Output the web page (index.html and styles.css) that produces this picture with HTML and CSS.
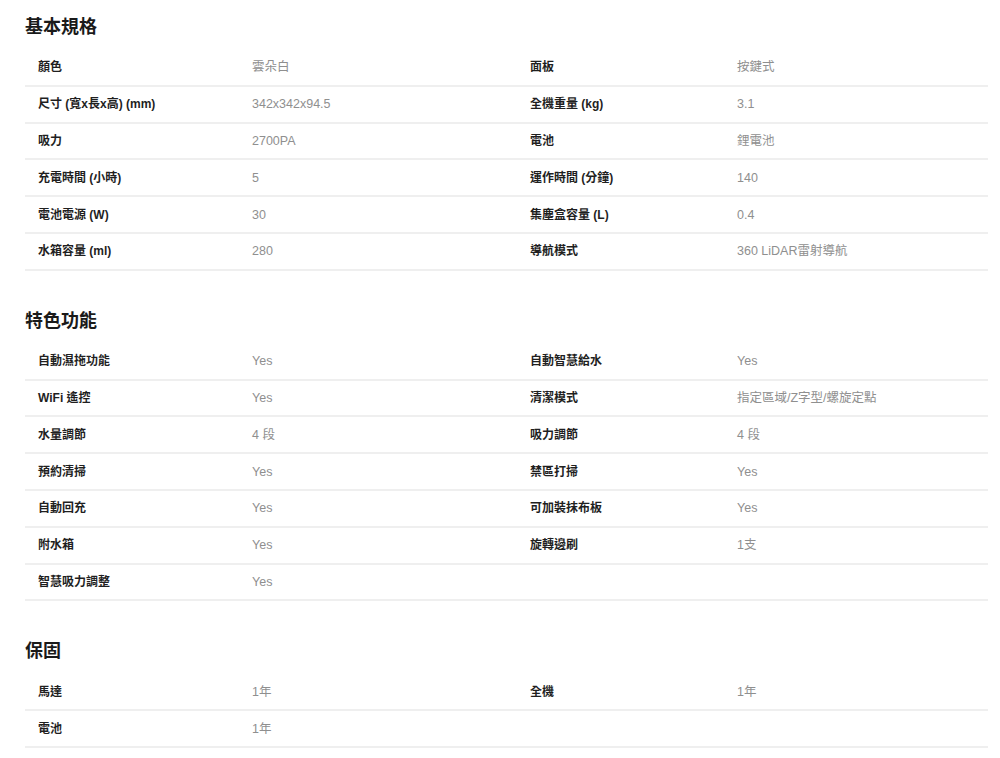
FILE: index.html
```html
<!DOCTYPE html>
<html lang="zh-Hant">
<head>
<meta charset="utf-8">
<title>規格</title>
<link rel="stylesheet" href="styles.css">
</head>
<body>
<div class="page">
  <section class="spec">
    <h2 class="spec-title">基本規格</h2>
    <div class="spec-grid">
      <div class="row"><span class="label">顏色</span><span class="value">雲朵白</span><span class="label">面板</span><span class="value">按鍵式</span></div>
      <div class="row"><span class="label">尺寸 (寬x長x高) (mm)</span><span class="value">342x342x94.5</span><span class="label">全機重量 (kg)</span><span class="value">3.1</span></div>
      <div class="row"><span class="label">吸力</span><span class="value">2700PA</span><span class="label">電池</span><span class="value">鋰電池</span></div>
      <div class="row"><span class="label">充電時間 (小時)</span><span class="value">5</span><span class="label">運作時間 (分鐘)</span><span class="value">140</span></div>
      <div class="row"><span class="label">電池電源 (W)</span><span class="value">30</span><span class="label">集塵盒容量 (L)</span><span class="value">0.4</span></div>
      <div class="row"><span class="label">水箱容量 (ml)</span><span class="value">280</span><span class="label">導航模式</span><span class="value">360 LiDAR雷射導航</span></div>
    </div>
  </section>
  <section class="spec">
    <h2 class="spec-title">特色功能</h2>
    <div class="spec-grid">
      <div class="row"><span class="label">自動濕拖功能</span><span class="value">Yes</span><span class="label">自動智慧給水</span><span class="value">Yes</span></div>
      <div class="row"><span class="label">WiFi 遙控</span><span class="value">Yes</span><span class="label">清潔模式</span><span class="value">指定區域/Z字型/螺旋定點</span></div>
      <div class="row"><span class="label">水量調節</span><span class="value">4 段</span><span class="label">吸力調節</span><span class="value">4 段</span></div>
      <div class="row"><span class="label">預約清掃</span><span class="value">Yes</span><span class="label">禁區打掃</span><span class="value">Yes</span></div>
      <div class="row"><span class="label">自動回充</span><span class="value">Yes</span><span class="label">可加裝抹布板</span><span class="value">Yes</span></div>
      <div class="row"><span class="label">附水箱</span><span class="value">Yes</span><span class="label">旋轉邊刷</span><span class="value">1支</span></div>
      <div class="row"><span class="label">智慧吸力調整</span><span class="value">Yes</span><span class="label"></span><span class="value"></span></div>
    </div>
  </section>
  <section class="spec">
    <h2 class="spec-title">保固</h2>
    <div class="spec-grid">
      <div class="row"><span class="label">馬達</span><span class="value">1年</span><span class="label">全機</span><span class="value">1年</span></div>
      <div class="row"><span class="label">電池</span><span class="value">1年</span><span class="label"></span><span class="value"></span></div>
    </div>
  </section>
</div>
</body>
</html>
```

FILE: styles.css
```css
* { box-sizing: border-box; }
html, body { margin: 0; padding: 0; background: #ffffff; }
body {
  font-family: "Liberation Sans", "Noto Sans CJK TC", sans-serif;
  color: #222222;
}
.page {
  width: 1000px;
  padding: 13px 12px 0 25px;
}
.spec + .spec { margin-top: 36px; }
.spec-title {
  margin: 0 0 9px 0;
  font-size: 18px;
  line-height: 28px;
  font-weight: 700;
  color: #1a1a1a;
}
.spec-grid {
  display: flex;
  flex-direction: column;
}
.row {
  display: grid;
  grid-template-columns: 214px 278px 207px 1fr;
  height: 36.8px;
  align-items: center;
  border-bottom: 2px solid #efefef;
}
.label, .value {
  padding-left: 13px;
  line-height: 16px;
  white-space: nowrap;
}
.label { font-size: 12px; font-weight: 700; color: #1f1f1f; }
.value { font-size: 12.5px; font-weight: 400; color: #8f8f8f; }
```
